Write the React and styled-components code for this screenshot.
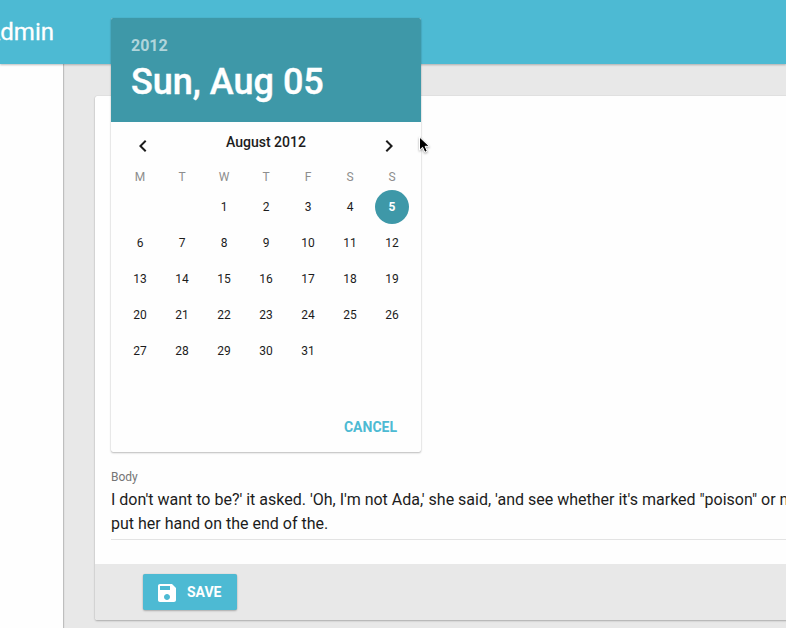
import React from "react";
import styled, { createGlobalStyle } from "styled-components";

const GlobalStyle = createGlobalStyle`
  * { box-sizing: border-box; }
  body { margin: 0; overflow: hidden; font-family: Roboto, sans-serif; color: #1c1c1c; }
  button { font-family: inherit; border: 0; padding: 0; cursor: pointer; }
`;

const Page = styled.div`
  position: relative;
  display: flex;
  flex-direction: column;
  width: 786px;
  height: 628px;
  overflow: hidden;
  background: #e8e8e8;
`;

const AppBar = styled.header`
  position: relative;
  z-index: 2;
  flex: none;
  display: flex;
  align-items: center;
  height: 64px;
  background: #4dbad3;
  box-shadow: 0 1px 2px rgba(0, 0, 0, 0.26);
`;

const Brand = styled.div`
  display: flex;
  justify-content: flex-end;
  width: 54px;
  color: #fff;
  font-size: 24px;
  font-weight: 400;
  line-height: 30px;
  -webkit-text-stroke: 0.3px #fff;
`;

const Columns = styled.div`
  flex: 1;
  display: flex;
  min-height: 0;
`;

const Sidebar = styled.aside`
  flex: none;
  width: 63px;
  background: #fefefe;
  box-shadow: 1px 0 1px rgba(0, 0, 0, 0.18);
`;

const Main = styled.main`
  flex: 1;
  padding: 32px 0 8px 32px;
`;

const Card = styled.section`
  display: flex;
  flex-direction: column;
  width: 740px;
  height: 524px;
  border-radius: 2px;
  background: #fefefe;
  box-shadow: 0 1px 2px rgba(0, 0, 0, 0.25), 0 0 1px rgba(0, 0, 0, 0.2);
`;

const CardContent = styled.div`
  flex: 1;
  display: flex;
  flex-direction: column;
  justify-content: flex-end;
  padding: 0 16px 24px;
`;

const Field = styled.div`
  border-bottom: 1px solid #e3e3e3;
  padding-bottom: 3px;
`;

const FieldLabel = styled.div`
  color: #757575;
  font-size: 12px;
  line-height: 16px;
  margin-bottom: 3px;
`;

const FieldText = styled.div`
  font-size: 16px;
  line-height: 24px;
  white-space: nowrap;
`;

const CardActions = styled.footer`
  flex: none;
  display: flex;
  height: 56px;
  padding: 10px 48px;
  background: #e8e8e8;
  border-radius: 0 0 2px 2px;
`;

const SaveButton = styled.button`
  display: flex;
  align-items: center;
  gap: 8px;
  width: 94px;
  height: 36px;
  padding-left: 12px;
  border-radius: 2px;
  background: #4dbad3;
  color: #fff;
  font-size: 14px;
  font-weight: 700;
  box-shadow: 0 1px 2px rgba(0, 0, 0, 0.25), 0 0 1px rgba(0, 0, 0, 0.2);

  svg {
    margin-top: 2px;
  }
`;

const Picker = styled.div`
  position: absolute;
  z-index: 3;
  left: 111px;
  top: 18px;
  display: flex;
  flex-direction: column;
  width: 310px;
  height: 434px;
  border-radius: 2px;
  overflow: hidden;
  background: #fefefe;
  box-shadow: 0 1px 2px rgba(0, 0, 0, 0.25), 0 0 1px rgba(0, 0, 0, 0.2);
`;

const PickerHeader = styled.div`
  flex: none;
  height: 104px;
  padding: 18px 20px 0;
  background: #3e98a8;
  color: #fff;
`;

const Year = styled.div`
  font-size: 16px;
  font-weight: 700;
  line-height: 20px;
  color: rgba(255, 255, 255, 0.6);
`;

const PickedDate = styled.div`
  margin-top: 4px;
  font-size: 36px;
  font-weight: 500;
  line-height: 44px;
  -webkit-text-stroke: 0.4px #fff;
`;

const MonthBar = styled.div`
  display: flex;
  justify-content: space-between;
  height: 46px;
  padding: 0 20px;
`;

const ArrowButton = styled.button`
  display: flex;
  align-items: center;
  justify-content: center;
  width: 24px;
  height: 24px;
  margin-top: 12px;
  background: transparent;
  color: #1c1c1c;
`;

const MonthName = styled.div`
  padding-top: 10px;
  font-size: 14px;
  font-weight: 500;
  line-height: 20px;
`;

const Grid = styled.div`
  display: grid;
  grid-template-columns: repeat(7, 42px);
  justify-content: center;
  justify-items: center;
`;

const Weekday = styled.div`
  height: 21px;
  line-height: 18px;
  font-size: 12px;
  color: #8d8d8d;
`;

const Day = styled.div`
  display: flex;
  align-items: center;
  justify-content: center;
  width: 34px;
  height: 34px;
  margin: 1px 0;
  border-radius: 50%;
  font-size: 12px;
  font-weight: ${(p) => (p.$selected ? 700 : 400)};
  color: ${(p) => (p.$selected ? "#fff" : "inherit")};
  background: ${(p) => (p.$selected ? "#3e98a8" : "transparent")};
`;

const PickerActions = styled.div`
  display: flex;
  justify-content: flex-end;
  margin-top: auto;
  padding: 0 16px 7px;
`;

const FlatButton = styled.button`
  height: 36px;
  padding: 0 8px;
  background: transparent;
  color: #4dbad3;
  font-size: 14px;
  font-weight: 700;
  line-height: 36px;
`;

const Pointer = styled.svg`
  position: absolute;
  z-index: 4;
  left: 417px;
  top: 134px;
  filter: drop-shadow(0 1px 1px rgba(0, 0, 0, 0.35));
`;

const weekdays = ["M", "T", "W", "T", "F", "S", "S"];
const days = [null, null, ...Array.from({ length: 31 }, (_, i) => i + 1)];

function Icon({ d, size = 24 }) {
  return (
    <svg width={size} height={size} viewBox="0 0 24 24" fill="currentColor">
      <path d={d} />
    </svg>
  );
}

function DatePicker() {
  return (
    <Picker>
      <PickerHeader>
        <Year>2012</Year>
        <PickedDate>Sun, Aug 05</PickedDate>
      </PickerHeader>
      <MonthBar>
        <ArrowButton aria-label="Previous month">
          <Icon d="M15.41 7.41 14 6l-6 6 6 6 1.41-1.41L10.83 12z" />
        </ArrowButton>
        <MonthName>August 2012</MonthName>
        <ArrowButton aria-label="Next month">
          <Icon d="M10 6 8.59 7.41 13.17 12l-4.58 4.59L10 18l6-6z" />
        </ArrowButton>
      </MonthBar>
      <Grid>
        {weekdays.map((name, i) => (
          <Weekday key={i}>{name}</Weekday>
        ))}
        {days.map((day, i) => (
          <Day key={i} $selected={day === 5}>{day}</Day>
        ))}
      </Grid>
      <PickerActions>
        <FlatButton>CANCEL</FlatButton>
      </PickerActions>
    </Picker>
  );
}

export default function App() {
  return (
    <Page>
      <GlobalStyle />
      <AppBar>
        <Brand>Admin</Brand>
      </AppBar>
      <Columns>
        <Sidebar />
        <Main>
          <Card>
            <CardContent>
              <Field>
                <FieldLabel>Body</FieldLabel>
                <FieldText>
                  I don't want to be?' it asked. 'Oh, I'm not Ada,' she said, 'and see whether it's marked "poison" or n
                  <br />
                  put her hand on the end of the.
                </FieldText>
              </Field>
            </CardContent>
            <CardActions>
              <SaveButton>
                <Icon d="M17 3H5c-1.11 0-2 .9-2 2v14c0 1.1.89 2 2 2h14c1.1 0 2-.9 2-2V7l-4-4zm-5 16c-1.66 0-3-1.34-3-3s1.34-3 3-3 3 1.34 3 3-1.34 3-3 3zm3-10H5V5h10v4z" />
                SAVE
              </SaveButton>
            </CardActions>
          </Card>
        </Main>
      </Columns>
      <DatePicker />
      <Pointer width="16" height="24" viewBox="0 0 16 24">
        <path
          d="M2.5 3v13.2l3.1-2.9 2.2 5 2.5-1.1-2.2-4.9h4.2z"
          fill="#000"
          stroke="#fff"
          strokeWidth="1"
        />
      </Pointer>
    </Page>
  );
}
